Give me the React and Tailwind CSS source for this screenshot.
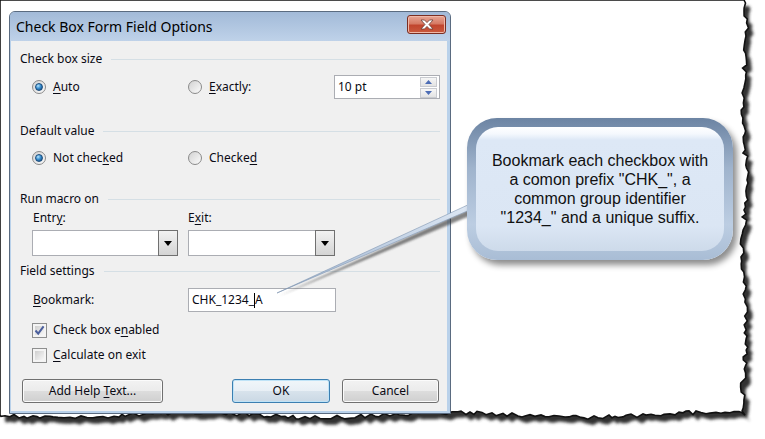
import React from 'react';

const uiFont = { fontFamily: '"Noto Sans", "Open Sans", sans-serif' };
const noteFont = { fontFamily: '"Liberation Sans", Arial, sans-serif' };

// jagged "torn paper" outline for the screenshot frame
function tornPath() {
  let s = 11;
  const r = () => {
    s = (s * 9301 + 49297) % 233280;
    return s / 233280;
  };
  const pts = [[0, 0], [744, 0]];
  for (let y = 3; y < 413; y += 3 + Math.floor(r() * 3)) {
    pts.push([742 + r() * 5 + Math.sin(y / 23) * 1.8, y]);
  }
  for (let x = 745; x > 0; x -= 3 + Math.floor(r() * 4)) {
    pts.push([x, 413 + r() * 4 + Math.sin(x / 41) * 2.5]);
  }
  pts.push([0, 415]);
  return 'M' + pts.map((p) => p[0].toFixed(1) + ' ' + p[1].toFixed(1)).join(' L') + ' Z';
}

function U({ children }) {
  return <span className="underline underline-offset-2">{children}</span>;
}

function Radio({ checked }) {
  return (
    <span className="flex h-[14px] w-[14px] shrink-0 items-center justify-center rounded-full border border-[#8a8a8a] bg-[linear-gradient(135deg,#d2d2d2,#fbfbfb)]">
      {checked && (
        <span className="h-[8px] w-[8px] rounded-full border border-[#1b4c7c] bg-[radial-gradient(circle_at_35%_30%,#b5e6ff_0%,#3a8fd0_45%,#0c3d6e_100%)]" />
      )}
    </span>
  );
}

function Check({ checked }) {
  return (
    <span className="flex h-[15px] w-[15px] shrink-0 border border-[#8e8f8f] bg-[#f4f4f4] p-[2px]">
      <span className="relative h-full w-full bg-[linear-gradient(135deg,#cfcfcf,#f7f7f7)]">
        {checked && (
          <svg className="absolute left-[-1px] top-[-1px]" width="11" height="11" viewBox="0 0 11 11">
            <path d="M1.5 5.5 L4.2 8.6 L9.6 1.4" fill="none" stroke="#4b5f9d" strokeWidth="2" />
          </svg>
        )}
      </span>
    </span>
  );
}

function Group({ title, className }) {
  return (
    <div className={'flex h-4 items-center gap-[9px] pl-[9px] pr-[7px] ' + className}>
      <span>{title}</span>
      <span className="h-px flex-1 bg-[#d5dfe5]" />
    </div>
  );
}

function SpinBtn({ up }) {
  return (
    <div className="flex h-[10px] items-center justify-center border border-[#c9cbd0] bg-[linear-gradient(180deg,#f7f7f7,#e3e3e3)]">
      <svg width="7" height="4" viewBox="0 0 7 4">
        <path d={up ? 'M0 4 L3.5 0 L7 4 Z' : 'M0 0 L3.5 4 L7 0 Z'} fill="#4d6db5" />
      </svg>
    </div>
  );
}

function Combo({ className }) {
  return (
    <div className={'flex h-[26px] justify-end border border-[#abadb3] bg-white ' + className}>
      <div className="my-[-1px] mr-[-1px] flex w-[20px] items-center justify-center border border-[#707070] bg-[linear-gradient(180deg,#f2f2f2,#d4d4d4)]">
        <svg width="8" height="5" viewBox="0 0 8 5">
          <path d="M0 0 L8 0 L4 5 Z" fill="#000" />
        </svg>
      </div>
    </div>
  );
}

function Button({ children, primary, className }) {
  return (
    <div
      className={
        'flex h-[24px] items-center justify-center rounded-[3px] border ' +
        (primary
          ? 'border-[#3c7fb1] bg-[linear-gradient(180deg,#f0f6fa_0%,#e8eff5_50%,#d8e3ec_50%,#cad8e4_100%)] shadow-[inset_0_0_0_1px_#bfe3f7] '
          : 'border-[#707070] bg-[linear-gradient(180deg,#f2f2f2_0%,#ebebeb_50%,#dddddd_50%,#cfcfcf_100%)] shadow-[inset_0_0_0_1px_#fbfbfb] ') +
        className
      }
    >
      {children}
    </div>
  );
}

function CloseBtn() {
  return (
    <div className="mt-[3px] flex h-[19px] w-[39px] items-center justify-center self-start rounded-[3px] border border-[#7b2e22] bg-[linear-gradient(180deg,#e8a594_0%,#d67a64_45%,#c1452e_55%,#c95a3e_100%)] shadow-[inset_0_0_0_1px_#f0b8a8]">
      <svg width="14" height="11" viewBox="0 0 14 11">
        <path
          d="M1 1 L4.5 1 L7 3.6 L9.5 1 L13 1 L9 5.5 L13 10 L9.5 10 L7 7.4 L4.5 10 L1 10 L5 5.5 Z"
          fill="#fff"
          stroke="#6a4038"
          strokeWidth="0.8"
        />
      </svg>
    </div>
  );
}

function Dialog() {
  return (
    <div className="relative z-10 ml-[9px] mt-[11px] flex h-[403px] w-[442px] shrink-0 flex-col overflow-hidden rounded-t-[6px] border border-[#5a6b80] bg-[#b9d1ea]" style={uiFont}>
      <div className="flex h-[29px] items-center justify-between bg-[linear-gradient(180deg,#a2bad8,#bfd2e9)] pl-[6px] pr-[4px]">
        <span className="text-[14px] text-black">Check Box Form Field Options</span>
        <CloseBtn />
      </div>
      <div className="mb-[2px] ml-px mr-[3px] flex-1 bg-[#f0f0f0] text-[12px] text-[#0a0a14]">
        <Group title="Check box size" className="mt-[10px]" />
        <div className="mt-[8px] flex h-[24px] items-center">
          <div className="ml-[21px] flex w-[156px] items-center gap-[7px]">
            <Radio checked />
            <span>
              <U>A</U>uto
            </span>
          </div>
          <div className="flex w-[146px] items-center gap-[7px]">
            <Radio />
            <span>
              <U>E</U>xactly:
            </span>
          </div>
          <div className="flex h-[24px] w-[106px] items-center border border-[#abadb3] bg-white">
            <span className="flex-1 pl-[3px]">10 pt</span>
            <div className="mr-[2px] flex w-[17px] flex-col gap-px">
              <SpinBtn up />
              <SpinBtn />
            </div>
          </div>
        </div>

        <Group title="Default value" className="mt-[24px]" />
        <div className="mt-[11px] flex h-4 items-center">
          <div className="ml-[21px] flex w-[156px] items-center gap-[7px]">
            <Radio checked />
            <span>
              Not chec<U>k</U>ed
            </span>
          </div>
          <div className="flex items-center gap-[7px]">
            <Radio />
            <span>
              Checke<U>d</U>
            </span>
          </div>
        </div>

        <Group title="Run macro on" className="mt-[25px]" />
        <div className="mt-[3px] flex h-4 items-center">
          <span className="ml-[22px] w-[155px]">
            Entr<U>y</U>:
          </span>
          <span>
            E<U>x</U>it:
          </span>
        </div>
        <div className="mt-[4px] flex gap-[10px] pl-[21px]">
          <Combo className="w-[146px]" />
          <Combo className="w-[147px]" />
        </div>

        <Group title="Field settings" className="mt-[7px]" />
        <div className="mt-[9px] flex h-[24px] items-center">
          <span className="ml-[22px] w-[155px]">
            <U>B</U>ookmark:
          </span>
          <div className="flex h-[24px] w-[148px] items-center border border-[#abadb3] bg-white pl-[3px]">
            <span>CHK_1234_</span>
            <span className="h-[15px] w-px bg-black" />
            <span>A</span>
          </div>
        </div>
        <div className="mt-[10px] flex h-4 items-center gap-[6px] pl-[21px]">
          <Check checked />
          <span>
            Check box e<U>n</U>abled
          </span>
        </div>
        <div className="mt-[9px] flex h-4 items-center gap-[6px] pl-[21px]">
          <Check />
          <span>
            <U>C</U>alculate on exit
          </span>
        </div>

        <div className="mt-[16px] flex pl-[11px]">
          <Button className="w-[141px]">
            <span>
              Add Help <U>T</U>ext...
            </span>
          </Button>
          <Button primary className="ml-[69px] w-[98px]">
            OK
          </Button>
          <Button className="ml-[12px] w-[97px]">Cancel</Button>
        </div>
      </div>
    </div>
  );
}

function Callout() {
  return (
    <div className="relative z-30 ml-[16px] mt-[118px] h-[142px] w-[266px] shrink-0 rounded-[30px] bg-[linear-gradient(180deg,#6c84a3_0%,#9fb3cc_35%,#bccde2_75%,#a9bdd5_100%)] p-[9px] shadow-[4px_5px_6px_rgba(0,0,0,0.45)]">
      <div className="flex h-full items-center justify-center rounded-[22px] bg-[linear-gradient(180deg,#ffffff_0px,#f4f8fd_7px,#dde8f6_13px,#dbe6f4_80%,#cddaea_100%)] text-center text-[16px] leading-[19px] text-[#111]" style={noteFont}>
        <p>
          Bookmark each checkbox with
          <br />
          a comon prefix "CHK_", a
          <br />
          common group identifier
          <br />
          "1234_" and a unique suffix.
        </p>
      </div>
    </div>
  );
}

export default function App() {
  const d = tornPath();
  return (
    <div className="relative h-[439px] w-[765px] overflow-hidden bg-white">
      <svg className="pointer-events-none absolute inset-0" width="765" height="439">
        <defs>
          <filter id="soft" x="-5%" y="-5%" width="110%" height="110%">
            <feGaussianBlur stdDeviation="1.8" />
          </filter>
        </defs>
        <path d={d} transform="translate(5 6)" fill="#333" filter="url(#soft)" />
        <path d={d} fill="#fff" stroke="#111" strokeWidth="1.6" />
      </svg>

      <div className="relative flex items-start">
        <Dialog />
        <Callout />
      </div>

      {/* callout pointer */}
      <svg className="pointer-events-none absolute inset-0 z-20" width="765" height="439">
        <defs>
          <filter id="blur2" x="-5%" y="-20%" width="110%" height="140%">
            <feGaussianBlur stdDeviation="1.1" />
          </filter>
          <linearGradient id="wedge" x1="0" y1="0" x2="0" y2="1">
            <stop offset="0" stopColor="#dfe9f5" />
            <stop offset="1" stopColor="#9fb4cf" />
          </linearGradient>
        </defs>
        <polygon points="279,296 472,208 472,215" fill="#333" opacity="0.6" filter="url(#blur2)" />
        <polygon points="277,293 472,203 472,209" fill="url(#wedge)" stroke="#7d93b0" strokeWidth="0.6" />
      </svg>
    </div>
  );
}
